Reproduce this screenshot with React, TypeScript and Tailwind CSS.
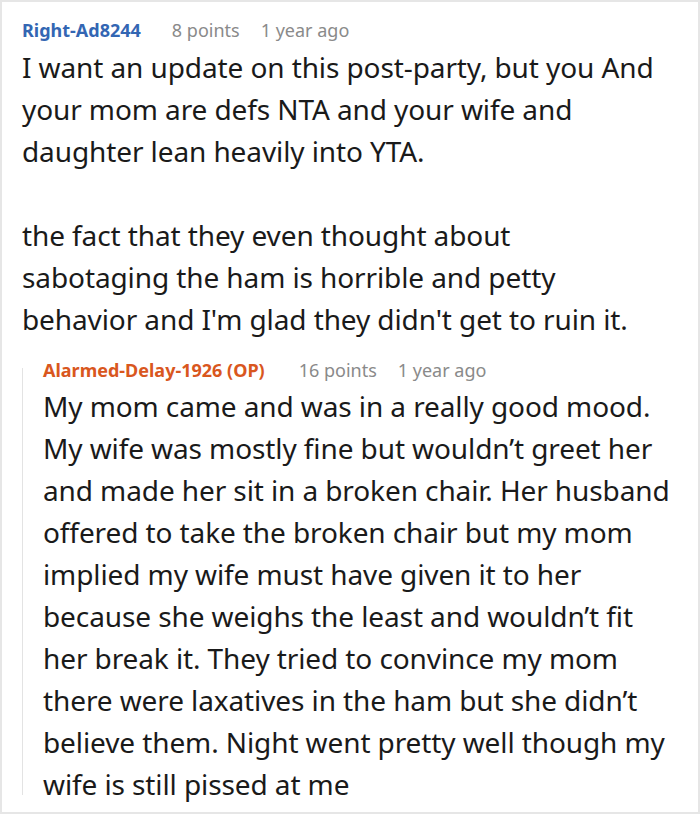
import React from "react";

const font = { fontFamily: '"Noto Sans", "Open Sans", sans-serif' };

function Header({ name, color, points, gap }: { name: string; color: string; points: string; gap: string }) {
  return (
    <div className="flex items-center h-[24px] text-[18px] leading-[24px] whitespace-nowrap">
      <span className={`font-bold ${color}`}>{name}</span>
      <span className={`${gap} text-[#8a8a8a]`}>{points}</span>
      <span className="ml-[21px] text-[#8a8a8a]">1 year ago</span>
    </div>
  );
}

function Lines({ lines }: { lines: string[] }) {
  return (
    <p className="whitespace-nowrap">
      {lines.map((l, i) => (
        <React.Fragment key={i}>
          {l}
          {i < lines.length - 1 && <br />}
        </React.Fragment>
      ))}
    </p>
  );
}

export default function App() {
  return (
    <div style={font} className="w-[700px] h-[814px] border-2 border-[#e6e6e6] bg-white text-[#1a1a1a] box-border overflow-hidden">
      <div className="pl-[20px] pr-[18px] pt-[16px]">
        <Header name="Right-Ad8244" color="text-[#3366b3]" points="8 points" gap="ml-[31px]" />
        <div className="mt-[4px] text-[28px] leading-[42px] tracking-[-0.1px]">
          <Lines
            lines={[
              "I want an update on this post-party, but you And",
              "your mom are defs NTA and your wife and",
              "daughter lean heavily into YTA.",
            ]}
          />
          <div className="mt-[42px]">
            <Lines
              lines={[
                "the fact that they even thought about",
                "sabotaging the ham is horrible and petty",
                "behavior and I'm glad they didn't get to ruin it.",
              ]}
            />
          </div>
        </div>
        <div className="mt-[18px] flex">
          <div className="w-px bg-[#e3e3e3] mt-[10px] mb-[10px] shrink-0" />
          <div className="pl-[20px]">
            <Header name="Alarmed-Delay-1926 (OP)" color="text-[#d9571e]" points="16 points" gap="ml-[34px]" />
            <div className="mt-[3px] text-[28px] leading-[42px] tracking-[-0.1px]">
              <Lines
                lines={[
                  "My mom came and was in a really good mood.",
                  "My wife was mostly fine but wouldn’t greet her",
                  "and made her sit in a broken chair. Her husband",
                  "offered to take the broken chair but my mom",
                  "implied my wife must have given it to her",
                  "because she weighs the least and wouldn’t fit",
                  "her break it. They tried to convince my mom",
                  "there were laxatives in the ham but she didn’t",
                  "believe them. Night went pretty well though my",
                  "wife is still pissed at me",
                ]}
              />
            </div>
          </div>
        </div>
      </div>
    </div>
  );
}
